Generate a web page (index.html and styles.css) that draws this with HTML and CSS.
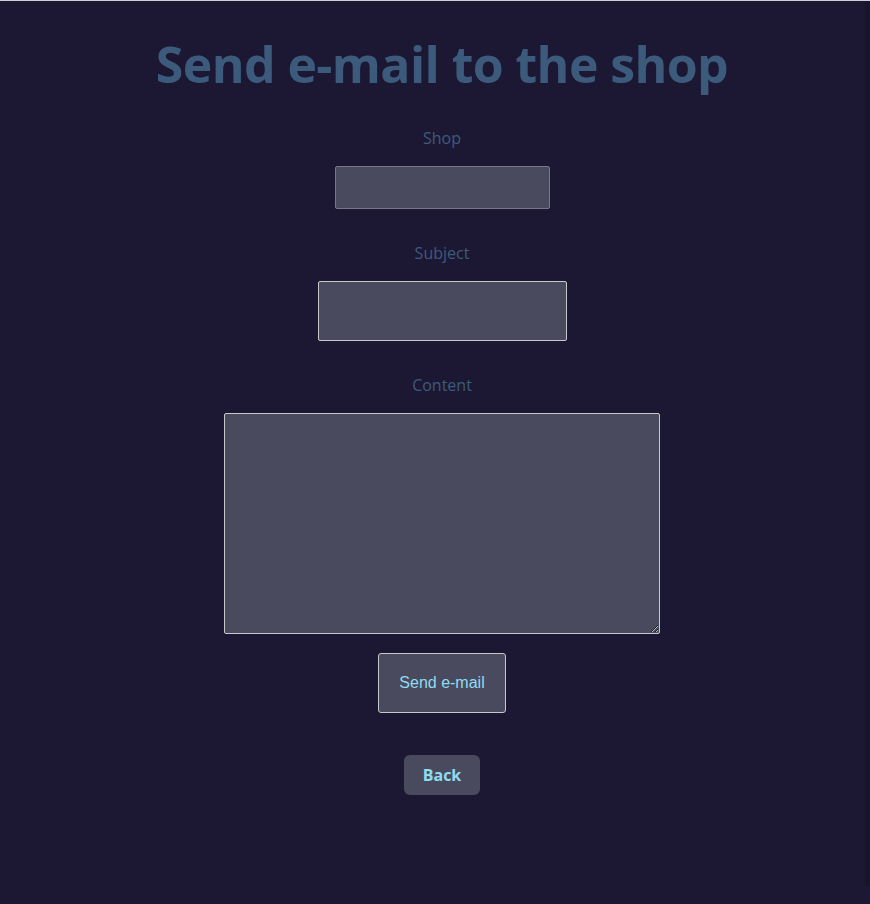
FILE: index.html
```html
<!DOCTYPE html>
<html lang="en">
<head>
<meta charset="utf-8">
<title>Send e-mail to the shop</title>
<link rel="stylesheet" href="styles.css">
</head>
<body>
<div class="edge"></div>
<main class="page">
  <h1 class="title">Send e-mail to the shop</h1>
  <form class="form">
    <label class="label" for="shop">Shop</label>
    <input class="field field-shop" id="shop" type="text">
    <label class="label" for="subject">Subject</label>
    <input class="field field-subject" id="subject" type="text">
    <label class="label" for="content">Content</label>
    <textarea class="field field-content" id="content"></textarea>
    <button class="send" type="button">Send e-mail</button>
  </form>
  <a class="back" href="#">Back</a>
</main>
</body>
</html>
```
FILE: styles.css
```css
html, body {
  margin: 0;
  padding: 0;
  background: #1c1833;
}
body {
  border-top: 1px solid #cfcfd4;
  min-height: 903px;
  font-family: "Open Sans", "Noto Sans", sans-serif;
}
.edge {
  position: fixed;
  top: 1px;
  right: 0;
  width: 5px;
  height: 885px;
  background: #17142b;
}
.page {
  display: flex;
  flex-direction: column;
  align-items: center;
  padding-left: 14px;
}
.title {
  margin: 30px 0 0;
  font-size: 50px;
  line-height: 66px;
  font-weight: 700;
  color: #3c5b7c;
  letter-spacing: -0.6px;
}
.form {
  display: flex;
  flex-direction: column;
  align-items: center;
  margin-top: 31px;
}
.label {
  font-size: 16px;
  line-height: 20px;
  color: #3c5b7c;
  margin-bottom: 18px;
}
.field {
  box-sizing: border-box;
  background: #4a4a5e;
  border: 1px solid #c8c8cc;
  border-radius: 2px;
  margin: 0 0 34px;
  padding: 0;
  color: #fff;
}
.field-shop {
  width: 215px;
  height: 43px;
  border-color: #77768a;
}
.field-subject {
  width: 249px;
  height: 60px;
}
.field-content {
  width: 436px;
  height: 221px;
  margin-bottom: 19px;
  display: block;
}
.send {
  box-sizing: border-box;
  width: 128px;
  height: 60px;
  background: #4a4a5e;
  border: 1px solid #c8c8cc;
  border-radius: 3px;
  color: #8fdcf0;
  font-family: "Liberation Sans", Arial, sans-serif;
  font-size: 16px;
  padding: 0;
}
.back {
  margin-top: 42px;
  display: flex;
  align-items: center;
  justify-content: center;
  width: 76px;
  height: 40px;
  border-radius: 6px;
  background: #4a4a5e;
  color: #8fdcf0;
  font-weight: 700;
  font-size: 16px;
  text-decoration: none;
}
```
